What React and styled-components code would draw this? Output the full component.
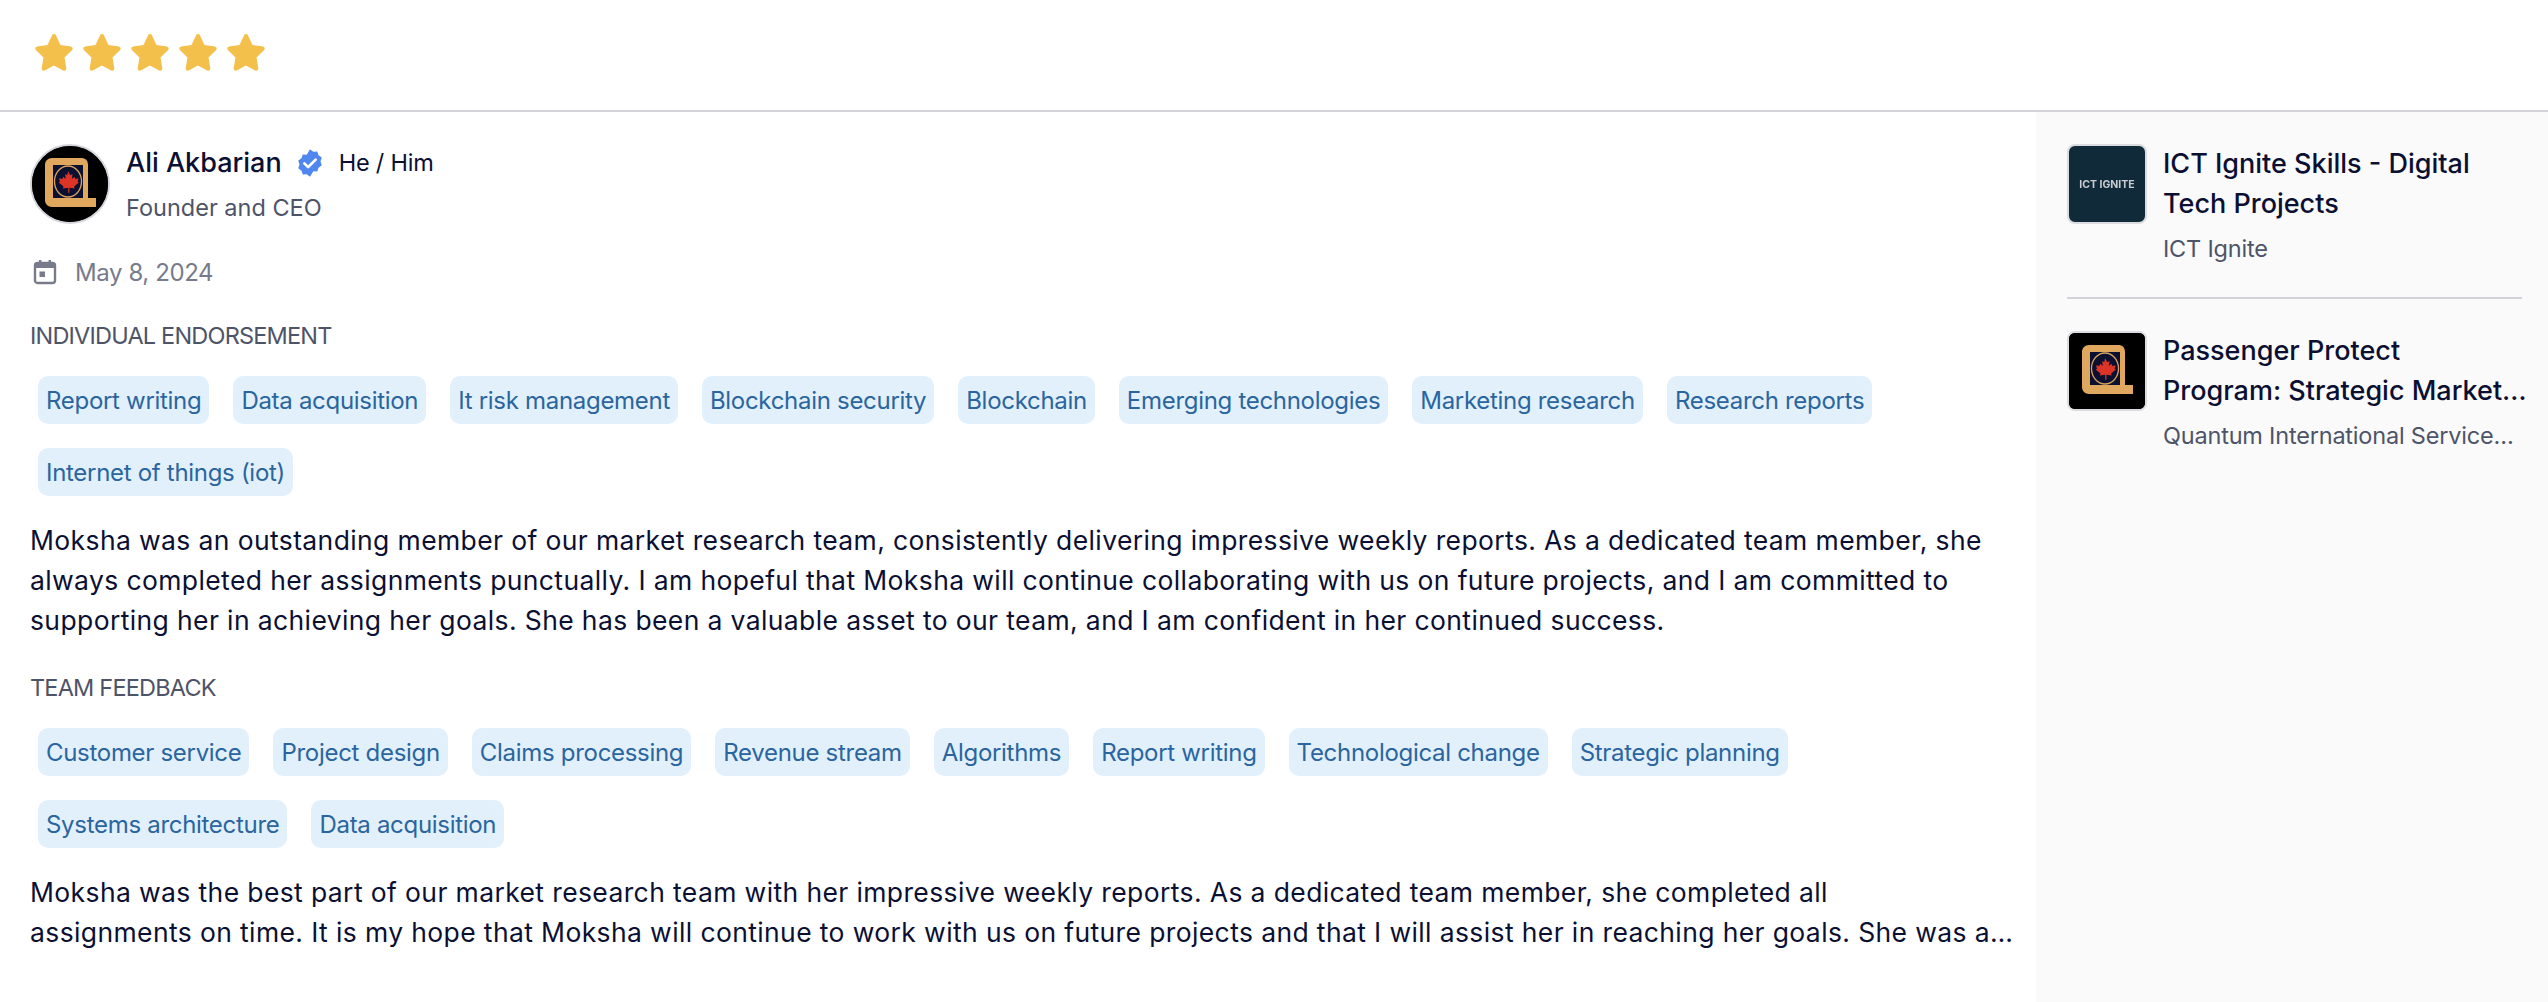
import React from "react";
import styled, { createGlobalStyle } from "styled-components";

const Global = createGlobalStyle`
  html, body { margin: 0; padding: 0; background: #fff; }
  body { font-family: "Inter", "Noto Sans", sans-serif; color: #0b1033; }
  #root { width: 2548px; height: 1002px; overflow: hidden; }
`;

const Page = styled.div`
  width: 2548px;
  height: 1002px;
  display: flex;
  flex-direction: column;
  overflow: hidden;
`;
const Header = styled.header`
  height: 112px;
  box-sizing: border-box;
  border-bottom: 2px solid #d2d2d8;
  display: flex;
  align-items: center;
  gap: 6px;
  padding: 0 0 4px 33px;
  flex: none;
`;
const Body = styled.div`
  flex: 1;
  display: flex;
  min-height: 0;
`;
const Main = styled.main`
  width: 2036px;
  box-sizing: border-box;
  padding: 32px 30px 0;
  flex: none;
`;
const Side = styled.aside`
  flex: 1;
  background: #fafafa;
  box-sizing: border-box;
  padding: 32px 26px 0 31px;
`;
const SideInner = styled.div`
  width: 455px;
`;
const Person = styled.div`
  display: flex;
  align-items: center;
  gap: 16px;
`;
const Avatar = styled.div`
  width: 80px;
  height: 80px;
  border-radius: 50%;
  border: 2px solid #d4d4da;
  box-sizing: border-box;
  overflow: hidden;
  flex: none;
  background: #000;
  display: flex;
`;
const PersonText = styled.div`
  display: flex;
  flex-direction: column;
  gap: 11px;
`;
const NameRow = styled.div`
  display: flex;
  align-items: center;
  height: 36px;
`;
const Name = styled.span`
  font-size: 27px;
  font-weight: 500;
  letter-spacing: 0;
`;
const Pronouns = styled.span`
  font-size: 23.5px;
  letter-spacing: -0.2px;
  margin-left: 14px;
`;
const Badge = styled.svg`
  width: 30px;
  height: 30px;
  margin-left: 13px;
`;
const Role = styled.div`
  font-size: 23.5px;
  color: #4e5468;
  letter-spacing: 0;
  line-height: 32px;
`;
const DateRow = styled.div`
  display: flex;
  align-items: center;
  gap: 18px;
  margin-top: 28px;
  height: 40px;
  padding-left: 3px;
  color: #777b8c;
  font-size: 24px;
  letter-spacing: -0.4px;
`;
const Section = styled.div`
  font-size: 23.5px;
  color: #4e5468;
  letter-spacing: -0.8px;
  line-height: 40px;
  margin-top: ${(p) => p.$top}px;
`;
const Chips = styled.div`
  display: flex;
  flex-wrap: wrap;
  gap: 24px;
  padding: 20px 8px 0;
`;
const Chip = styled.span`
  height: 48px;
  box-sizing: border-box;
  padding: 0 8px;
  border-radius: 10px;
  background: #e2f0fc;
  color: #2a659f;
  font-size: 24px;
  letter-spacing: -0.3px;
  display: flex;
  align-items: center;
  white-space: nowrap;
`;
const Paragraph = styled.p`
  margin: 24px 0 0;
  font-size: 26.5px;
  line-height: 40px;
  letter-spacing: 0.38px;
  white-space: nowrap;
  color: #0b1033;
`;
const Project = styled.div`
  display: flex;
  gap: 16px;
`;
const Thumb = styled.div`
  width: 80px;
  height: 80px;
  border-radius: 8px;
  border: 2px solid #dcdce0;
  box-sizing: border-box;
  overflow: hidden;
  flex: none;
  background: ${(p) => p.$bg};
  display: flex;
  align-items: center;
  justify-content: center;
`;
const ThumbLabel = styled.span`
  color: #c9cdd2;
  font-size: 10.5px;
  font-weight: 700;
  filter: blur(0.5px);
  white-space: nowrap;
`;
const ProjectText = styled.div`
  min-width: 0;
  flex: 1;
`;
const ProjectTitle = styled.div`
  font-size: 27px;
  font-weight: 500;
  line-height: 40px;
  letter-spacing: 0;
  white-space: nowrap;
`;
const ProjectOrg = styled.div`
  font-size: 23.5px;
  line-height: 32px;
  color: #4e5468;
  letter-spacing: -0.2px;
  margin-top: 9px;
  white-space: nowrap;
`;
const Divider = styled.hr`
  border: 0;
  border-top: 2px solid #d2d2d8;
  margin: 32px 0 32px;
`;

const Star = () => (
  <svg width="42" height="42" viewBox="0 0 24 24" fill="#f3c14b">
    <path d="M10.9 1.9c.45-.95 1.75-.95 2.2 0l2.6 5.5 5.95.85c1 .15 1.4 1.4.68 2.1l-4.33 4.25 1.05 6.05c.17 1-.88 1.75-1.77 1.28L12 19.1l-5.28 2.83c-.9.47-1.94-.28-1.77-1.28L6 14.6 1.67 10.35c-.72-.7-.32-1.95.68-2.1l5.95-.85z" />
  </svg>
);

const Logo = ({ size }) => (
  <svg width={size} height={size} viewBox="0 0 76 76">
    <rect width="76" height="76" fill="#000" />
    <path d="M20 12h29c4.5 0 7 2.5 7 7v33h8v9H20c-4 0-7-3-7-7V19c0-4 3-7 7-7z" fill="#e0a85f" />
    <rect x="21" y="19" width="30" height="33" fill="#0c1030" />
    <ellipse cx="36" cy="35.5" rx="13.5" ry="15.5" fill="none" stroke="#d9a25a" strokeWidth="1.3" />
    <path d="M36 25l2.3 4.2 2.2-1.2-.7 5 2.6-2.3.9 2.2 3.3-.6-1 3.4 1.3.9-4.8 3.9.6 2-5.3-.7v5h-1.2v-5l-5.3.7.6-2-4.8-3.9 1.3-.9-1-3.4 3.3.6.9-2.2 2.6 2.3-.7-5 2.2 1.2z" fill="#dc3527" />
  </svg>
);

const Tags = ({ items }) => (
  <Chips>
    {items.map((t) => (
      <Chip key={t}>{t}</Chip>
    ))}
  </Chips>
);

export default function App() {
  return (
    <Page>
      <Global />
      <Header>
        {[0, 1, 2, 3, 4].map((i) => (
          <Star key={i} />
        ))}
      </Header>
      <Body>
        <Main>
          <Person>
            <Avatar>
              <Logo size={76} />
            </Avatar>
            <PersonText>
              <NameRow>
                <Name>Ali Akbarian</Name>
                <Badge viewBox="0 0 24 24">
                  <path
                    fill="#4f86f0"
                    d="M12 1l2.6 1.9 3.2-.2 1 3 2.6 1.9-1 3.1 1 3.1-2.6 1.9-1 3-3.2-.2L12 23l-2.6-2.1-3.2.2-1-3-2.6-1.9 1-3.1-1-3.1 2.6-1.9 1-3 3.2.2z"
                  />
                  <path d="M7.5 12.3l3 3 6-6" fill="none" stroke="#fff" strokeWidth="2.2" strokeLinecap="round" strokeLinejoin="round" />
                </Badge>
                <Pronouns>He / Him</Pronouns>
              </NameRow>
              <Role>Founder and CEO</Role>
            </PersonText>
          </Person>
          <DateRow>
            <svg width="24" height="26" viewBox="0 0 24 26" fill="none">
              <rect x="2" y="4" width="20" height="20" rx="2.5" stroke="#777b8c" strokeWidth="2.4" />
              <rect x="2" y="4" width="20" height="5" fill="#777b8c" />
              <rect x="6" y="1" width="2.4" height="5" fill="#777b8c" />
              <rect x="15.6" y="1" width="2.4" height="5" fill="#777b8c" />
              <rect x="6.5" y="12.5" width="5.5" height="5.5" fill="#777b8c" />
            </svg>
            May 8, 2024
          </DateRow>
          <Section $top={24}>INDIVIDUAL ENDORSEMENT</Section>
          <Tags items={["Report writing","Data acquisition","It risk management","Blockchain security","Blockchain","Emerging technologies","Marketing research","Research reports","Internet of things (iot)"]} />
          <Paragraph>
            Moksha was an outstanding member of our market research team, consistently delivering impressive weekly reports. As a dedicated team member, she
            <br />
            always completed her assignments punctually. I am hopeful that Moksha will continue collaborating with us on future projects, and I am committed to
            <br />
            supporting her in achieving her goals. She has been a valuable asset to our team, and I am confident in her continued success.
          </Paragraph>
          <Section $top={28}>TEAM FEEDBACK</Section>
          <Tags items={["Customer service","Project design","Claims processing","Revenue stream","Algorithms","Report writing","Technological change","Strategic planning","Systems architecture","Data acquisition"]} />
          <Paragraph>
            Moksha was the best part of our market research team with her impressive weekly reports. As a dedicated team member, she completed all
            <br />
            assignments on time. It is my hope that Moksha will continue to work with us on future projects and that I will assist her in reaching her goals. She was a…
          </Paragraph>
        </Main>
        <Side>
          <SideInner>
            <Project>
              <Thumb $bg="#112a3a">
                <ThumbLabel>ICT IGNITE</ThumbLabel>
              </Thumb>
              <ProjectText>
                <ProjectTitle>ICT Ignite Skills - Digital<br />Tech Projects</ProjectTitle>
                <ProjectOrg>ICT Ignite</ProjectOrg>
              </ProjectText>
            </Project>
            <Divider />
            <Project>
              <Thumb $bg="#000">
                <Logo size={76} />
              </Thumb>
              <ProjectText>
                <ProjectTitle>Passenger Protect<br />Program: Strategic Market…</ProjectTitle>
                <ProjectOrg>Quantum International Service…</ProjectOrg>
              </ProjectText>
            </Project>
          </SideInner>
        </Side>
      </Body>
    </Page>
  );
}
